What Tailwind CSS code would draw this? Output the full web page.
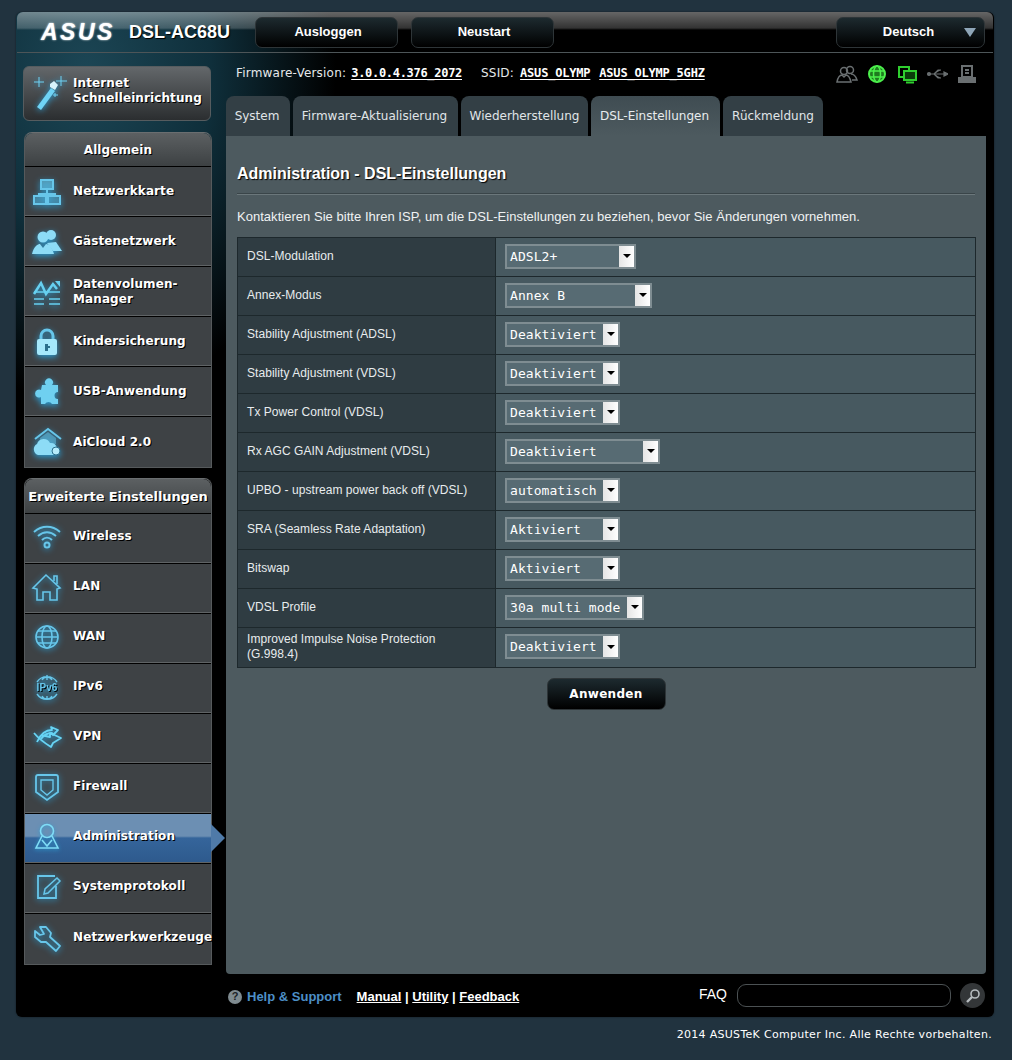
<!DOCTYPE html>
<html lang="de">
<head>
    <meta charset="UTF-8">
    <meta name="viewport" content="width=device-width, initial-scale=1.0">
    <title>ASUS DSL-AC68U - DSL-Einstellungen</title>
    <script src="https://cdn.jsdelivr.net/npm/@tailwindcss/browser@4"></script>
</head>
<body class="bg-[#21333f] font-['Liberation_Sans',Arial,sans-serif] text-white h-[1060px] overflow-hidden">
    <div class="pt-[12px] pl-[16px]">
        <div class="relative w-[978px] h-[1005px] rounded-[6px] bg-black bg-[radial-gradient(ellipse_250px_330px_at_70px_60px,#1c4655_0%,#0f2f3b_50%,#000_100%)] shadow-[0_0_2px_#0008] flex flex-col">

            <!-- Header -->
            <div class="h-[41px] mx-[1px] rounded-t-[6px] border-b border-[#4d5558] bg-[linear-gradient(to_bottom,#ffffff66_0px,#ffffff33_16px,#ffffff00_18px)] flex items-center shrink-0">
                <span class="ml-[24px] w-[72px] font-bold italic text-[23px] leading-none tracking-[2.5px] whitespace-nowrap [text-shadow:0_0_2px_#fff]">ASUS</span>
                <span class="ml-[16px] w-[110px] font-bold text-[18px] [text-shadow:1px_1px_1px_#000]">DSL-AC68U</span>
                <button class="ml-[16px] w-[143px] h-[31px] rounded-[7px] border border-[#2e3538] bg-[linear-gradient(to_bottom,#1d2a2f,#000)] font-bold text-[13px] pl-[3px]">Ausloggen</button>
                <button class="ml-[13px] w-[143px] h-[31px] rounded-[7px] border border-[#2e3538] bg-[linear-gradient(to_bottom,#1d2a2f,#000)] font-bold text-[13px] pl-[3px]">Neustart</button>
                <div class="relative ml-[282px] w-[149px] h-[31px] rounded-[7px] border border-[#2e3538] bg-[linear-gradient(to_bottom,#1d2a2f,#000)] font-bold text-[13px] flex items-center justify-center pr-[4px]">
                    Deutsch
                    <span class="absolute right-[8px] top-[10px] w-0 h-0 border-l-[6px] border-r-[6px] border-t-[9px] border-l-transparent border-r-transparent border-t-[#8fa6b8]"></span>
                </div>
            </div>

            <div class="flex flex-1 min-h-0">
                <!-- Sidebar -->
                <aside class="w-[210px] shrink-0 pl-[7px] pt-[13px] font-['DejaVu_Sans',sans-serif] font-bold text-[12px] tracking-[0.1px] leading-[15px] [text-shadow:1px_1px_0_#000]">
                    <div class="w-[188px] h-[55px] rounded-[6px] border border-[#565c5f] bg-[linear-gradient(to_bottom,#63676a,#2b2e30)] flex items-center">
                        <svg class="shrink-0 w-[36px] h-[36px] ml-[8px] mr-[5px] -mt-[3px] drop-shadow-[0_1px_3px_#2a9fd6]" viewBox="0 0 36 36" fill="none">
                            <path d="M5 33 L19 14 L23 17 L9 36 Z" fill="#6fd3f5"/>
                            <path d="M18 10 L22 7 L26 11 L23 16 L18 13 Z" fill="#d8f3fc"/>
                            <path d="M7 3 V13 M2 8 H12 M29 2 V12 M24 7 H35 M23 19 V23 M21 21 H26" stroke="#6fd3f5" stroke-width="1"/>
                        </svg>
                        <span class="pb-[6px]">Internet<br>Schnelleinrichtung</span>
                    </div>

                    <div class="mt-[11px] ml-[1px] w-[188px] rounded-t-[8px] border border-[#565a5c] border-t-[#6a6e70]">
                        <div class="h-[33px] rounded-t-[8px] bg-[linear-gradient(to_bottom,#5c6062,#3d4143)] flex items-center justify-center pt-[2px]">Allgemein</div>

                        <a class="h-[50px] border-t border-t-black bg-[#3e4245] border-b border-b-[#5f6365] flex items-center pt-[1px]">
                            <svg class="shrink-0 w-[32px] h-[32px] mx-[6px] mr-[10px] drop-shadow-[0_2px_3px_#2a9fd6]" viewBox="0 0 32 32" fill="none" stroke="#67c6ea" stroke-width="2">
                                <rect x="10" y="4" width="12" height="9" fill="#67c6ea" fill-opacity=".55"/>
                                <path d="M16 13 V18 M8 21 V18 H24 V21"/>
                                <rect x="3" y="20" width="12" height="8" fill="#67c6ea" fill-opacity=".3"/>
                                <rect x="17" y="20" width="12" height="8" fill="#67c6ea" fill-opacity=".3"/>
                            </svg>
                            <span>Netzwerkkarte</span>
                        </a>
                        <a class="h-[50px] border-t border-t-black bg-[#3e4245] border-b border-b-[#5f6365] flex items-center pt-[1px]">
                            <svg class="shrink-0 w-[32px] h-[32px] mx-[6px] mr-[10px] drop-shadow-[0_2px_3px_#2a9fd6]" viewBox="0 0 32 32" fill="#8ddcf6">
                                <circle cx="20" cy="9" r="5"/>
                                <path d="M16 17 L25 16 L31 25 L22 25 Z"/>
                                <circle cx="12" cy="11" r="5.5"/>
                                <path d="M1 28 C3 20 7 18 9 18 L12 22 L15 18 C18 18 21 21 23 28 Z"/>
                            </svg>
                            <span>Gästenetzwerk</span>
                        </a>
                        <a class="h-[50px] border-t border-t-black bg-[#3e4245] border-b border-b-[#5f6365] flex items-center pt-[1px]">
                            <svg class="shrink-0 w-[32px] h-[32px] mx-[6px] mr-[10px] drop-shadow-[0_2px_3px_#2a9fd6]" viewBox="0 0 32 32" fill="none" stroke="#67d0f0" stroke-width="2.5">
                                <path d="M3 18 L10 7 L15 18 L22 8 L26 13" />
                                <path d="M24 5 H29 V11 Z" fill="#67d0f0" stroke="none"/>
                                <path d="M3 16 H29 M3 23 H13 M18 23 H29 M3 28 H13 M18 28 H29" stroke-width="1.5"/>
                            </svg>
                            <span>Datenvolumen-<br>Manager</span>
                        </a>
                        <a class="h-[50px] border-t border-t-black bg-[#3e4245] border-b border-b-[#5f6365] flex items-center pt-[1px]">
                            <svg class="shrink-0 w-[32px] h-[32px] mx-[6px] mr-[10px] drop-shadow-[0_2px_3px_#2a9fd6]" viewBox="0 0 32 32">
                                <path d="M10 14 V10 A6 6 0 0 1 22 10 V14" fill="none" stroke="#67c6ea" stroke-width="3"/>
                                <rect x="6" y="13" width="20" height="16" rx="2" fill="#a5e8fb"/>
                                <path d="M14 18 H17 V20 H19 V22 H17 V25 H14 Z" fill="#2b6f8c"/>
                            </svg>
                            <span>Kindersicherung</span>
                        </a>
                        <a class="h-[50px] border-t border-t-black bg-[#3e4245] border-b border-b-[#5f6365] flex items-center pt-[1px]">
                            <svg class="shrink-0 w-[32px] h-[32px] mx-[6px] mr-[10px] drop-shadow-[0_2px_3px_#2a9fd6]" viewBox="0 0 32 32" fill="#6fd0f0">
                                <path d="M11 9 H15 A4 4 0 1 1 21 9 H27 V16 A3.5 3.5 0 1 0 27 23 V28 H21 A4 4 0 0 0 14 28 H10 V21 A4 4 0 1 1 10 14 Z"/>
                            </svg>
                            <span>USB-Anwendung</span>
                        </a>
                        <a class="h-[51px] border-t border-t-black bg-[#3e4245] flex items-center">
                            <svg class="shrink-0 w-[32px] h-[32px] mx-[6px] mr-[10px] drop-shadow-[0_2px_3px_#2a9fd6]" viewBox="0 0 32 32">
                                <path d="M4 13 L17 3 L30 13" fill="none" stroke="#67c6ea" stroke-width="2"/>
                                <path d="M9 12 L17 6 L25 12 V18 H9 Z" fill="#67c6ea" fill-opacity=".5"/>
                                <path d="M7 29 A6 6 0 0 1 6 18 A7 7 0 0 1 19 17 A6 6 0 0 1 26 23 A4 4 0 0 1 25 29 Z" fill="#8ddcf6"/>
                                <circle cx="25" cy="25" r="4" fill="#b6ecfb" stroke="#2b6f8c"/>
                            </svg>
                            <span>AiCloud 2.0</span>
                        </a>
                    </div>

                    <div class="mt-[10px] ml-[1px] w-[188px] rounded-t-[8px] border border-[#565a5c] border-t-[#6a6e70]">
                        <div class="h-[34px] rounded-t-[8px] bg-[linear-gradient(to_bottom,#5c6062,#3d4143)] flex items-center justify-center whitespace-nowrap text-[13px] tracking-[-0.1px]">Erweiterte Einstellungen</div>

                        <a class="h-[50px] border-t border-t-black bg-[#3e4245] border-b border-b-[#5f6365] flex items-center pb-[3px]">
                            <svg class="shrink-0 w-[32px] h-[32px] mx-[6px] mr-[10px] drop-shadow-[0_1px_3px_#2a9fd6]" viewBox="0 0 32 32" fill="none" stroke="#67c6ea" stroke-width="2">
                                <path d="M3 11 C11 4 21 4 29 11 M7 15 C13 10 19 10 25 15 M11 19 C14 16 18 16 21 19"/>
                                <circle cx="16" cy="24" r="2.5"/>
                            </svg>
                            <span>Wireless</span>
                        </a>
                        <a class="h-[50px] border-t border-t-black bg-[#3e4245] border-b border-b-[#5f6365] flex items-center pb-[3px]">
                            <svg class="shrink-0 w-[32px] h-[32px] mx-[6px] mr-[10px] drop-shadow-[0_1px_3px_#2a9fd6]" viewBox="0 0 32 32" fill="none" stroke="#67c6ea" stroke-width="1.6">
                                <path d="M2 17 L15 4 L29 17 L26 18 V29 H19 V21 H12 V29 H6 V18 Z"/>
                                <path d="M23 10 V5 H26 V13"/>
                            </svg>
                            <span>LAN</span>
                        </a>
                        <a class="h-[50px] border-t border-t-black bg-[#3e4245] border-b border-b-[#5f6365] flex items-center pb-[3px]">
                            <svg class="shrink-0 w-[32px] h-[32px] mx-[6px] mr-[10px] drop-shadow-[0_1px_3px_#2a9fd6]" viewBox="0 0 32 32" fill="none" stroke="#67c6ea" stroke-width="1.6">
                                <circle cx="16" cy="16" r="11"/>
                                <ellipse cx="16" cy="16" rx="5" ry="11"/>
                                <path d="M5 16 H27 M7 10 H25 M7 22 H25"/>
                            </svg>
                            <span>WAN</span>
                        </a>
                        <a class="h-[50px] border-t border-t-black bg-[#3e4245] border-b border-b-[#5f6365] flex items-center pb-[3px]">
                            <svg class="shrink-0 w-[32px] h-[32px] mx-[6px] mr-[10px] drop-shadow-[0_1px_3px_#2a9fd6]" viewBox="0 0 32 32" fill="none" stroke="#67c6ea" stroke-width="1.4">
                                <path d="M6 11 A12 12 0 0 1 26 11 M6 23 A12 12 0 0 0 26 23 M11 9 C13 5 19 5 21 9 M11 25 C13 29 19 29 21 25 M16 4 V9 M16 25 V29"/>
                                <text x="16" y="20" font-family="Liberation Sans" font-size="10" text-anchor="middle" fill="#67c6ea" stroke="none">IPv6</text>
                            </svg>
                            <span>IPv6</span>
                        </a>
                        <a class="h-[50px] border-t border-t-black bg-[#3e4245] border-b border-b-[#5f6365] flex items-center pb-[3px]">
                            <svg class="shrink-0 w-[32px] h-[32px] mx-[6px] mr-[10px] drop-shadow-[0_1px_3px_#2a9fd6]" viewBox="0 0 32 32" fill="none" stroke="#67d4f4" stroke-width="1.8" stroke-linejoin="round">
                                <path d="M3 12 C8 18 12 21 20 26 L22 22 L30 17 L19 12 L19 16 L10 14"/>
                                <path d="M6 21 C10 12 16 9 21 9 L20 6 L27 9 L22 14 L21 12 C16 12 12 15 10 18"/>
                            </svg>
                            <span>VPN</span>
                        </a>
                        <a class="h-[50px] border-t border-t-black bg-[#3e4245] border-b border-b-[#5f6365] flex items-center pb-[3px]">
                            <svg class="shrink-0 w-[32px] h-[32px] mx-[6px] mr-[10px] drop-shadow-[0_1px_3px_#2a9fd6]" viewBox="0 0 32 32" fill="none" stroke="#67c6ea" stroke-width="1.8">
                                <path d="M7 4 H25 Q27 4 27 6 V21 L16 29 L5 21 V6 Q5 4 7 4 Z"/>
                                <path d="M10 9 H22 V19 L16 24 L10 19 Z" stroke-width="1.4"/>
                            </svg>
                            <span>Firewall</span>
                        </a>
                        <a class="relative h-[50px] border-t border-t-black bg-[linear-gradient(to_bottom,#6c8fb3_0%,#6c8fb3_46%,#35659b_50%,#2e5a8d_100%)] border-b border-b-[#5f6365] flex items-center pb-[3px]">
                            <svg class="shrink-0 w-[32px] h-[32px] mx-[6px] mr-[10px] drop-shadow-[0_1px_2px_#2a9fd6]" viewBox="0 0 32 32" fill="none" stroke="#7fdcf6" stroke-width="1.6">
                                <circle cx="16" cy="10" r="6.5"/>
                                <path d="M11 15 L5 27 H27 L21 15 M11 19 L16 25 L21 19"/>
                            </svg>
                            <span>Administration</span>
                            <span class="absolute -right-[14px] top-[10px] w-0 h-0 border-t-[14px] border-b-[14px] border-l-[14px] border-t-transparent border-b-transparent border-l-[#4f7aa8]"></span>
                        </a>
                        <a class="h-[50px] border-t border-t-black bg-[#3e4245] border-b border-b-[#5f6365] flex items-center pb-[3px]">
                            <svg class="shrink-0 w-[32px] h-[32px] mx-[6px] mr-[10px] drop-shadow-[0_1px_3px_#2a9fd6]" viewBox="0 0 32 32" fill="none" stroke="#67c6ea" stroke-width="1.8">
                                <path d="M24 5 H7 V27 H25 V15"/>
                                <path d="M13 23 L14 18 L26 7 L29 10 L17 22 Z" stroke-width="1.5"/>
                            </svg>
                            <span>Systemprotokoll</span>
                        </a>
                        <a class="h-[51px] border-t border-t-black bg-[#3e4245] flex items-center pb-[3px]">
                            <svg class="shrink-0 w-[32px] h-[32px] mx-[6px] mr-[10px] drop-shadow-[0_1px_3px_#2a9fd6]" viewBox="0 0 32 32" fill="none" stroke="#67c6ea" stroke-width="1.8" stroke-linejoin="round">
                                <path d="M9 5 H15 L20 11 L19 15 L29 24 L25 29 L15 20 L10 20 L4 15 L4 9 L9 13 L13 12 Z"/>
                            </svg>
                            <span class="whitespace-nowrap">Netzwerkwerkzeuge</span>
                        </a>
                    </div>
                </aside>

                <!-- Main -->
                <main class="w-[760px] flex flex-col">
                    <div class="h-[43px] flex items-start pt-[12px] pl-[10px] font-['DejaVu_Sans',sans-serif] text-[12px] tracking-[0.2px] leading-[16px] text-[#e6e9eb]">
                        <span>Firmware-Version:</span>
                        <a class="ml-[5px] font-['DejaVu_Sans_Mono',monospace] font-bold text-[12px] tracking-[-0.3px] text-white underline underline-offset-2">3.0.0.4.376_2072</a>
                        <span class="ml-[19px]">SSID:</span>
                        <a class="ml-[6px] font-['DejaVu_Sans_Mono',monospace] font-bold text-[12px] tracking-[-0.2px] text-white underline underline-offset-2">ASUS_OLYMP</a>
                        <a class="ml-[9px] font-['DejaVu_Sans_Mono',monospace] font-bold text-[12px] tracking-[-0.2px] text-white underline underline-offset-2">ASUS_OLYMP_5GHZ</a>
                        <div class="ml-auto flex items-center gap-[8px] -mt-[1px] mr-[8px]">
                            <svg class="w-[22px] h-[20px]" viewBox="0 0 22 20" fill="none" stroke="#6a6f71" stroke-width="1.5">
                                <circle cx="14" cy="6" r="3.5"/><circle cx="8" cy="7" r="3.5"/>
                                <path d="M1 18 C2 13 4 11 6 11 L8 13 L10 11 C12 11 14 14 15 18 Z M15 10 C18 10 20 13 21 16 H16"/>
                            </svg>
                            <svg class="w-[22px] h-[20px]" viewBox="0 0 22 20" fill="#1f7a1f" stroke="#4cf04c" stroke-width="2">
                                <circle cx="11" cy="10" r="8"/>
                                <ellipse cx="11" cy="10" rx="3.5" ry="8" stroke-width="1.5"/>
                                <path d="M3 7 H19 M3 13 H19" stroke-width="1.5"/>
                            </svg>
                            <svg class="w-[22px] h-[20px]" viewBox="0 0 22 20" fill="none" stroke="#2fce2f" stroke-width="2">
                                <path d="M7 13 H3 V3 H13 V6"/>
                                <rect x="8" y="7" width="12" height="9" fill="#0b3d0b"/>
                                <path d="M10 18.5 H18"/>
                            </svg>
                            <svg class="w-[22px] h-[20px]" viewBox="0 0 22 20" fill="#6a6f71" stroke="#6a6f71" stroke-width="1.2">
                                <path d="M2 10 H20 M8 10 L12 6 H15 M8 10 L12 14 H15"/>
                                <circle cx="3" cy="10" r="1.5"/>
                                <path d="M18 8 L22 10 L18 12 Z"/>
                            </svg>
                            <svg class="w-[22px] h-[20px]" viewBox="0 0 22 20" fill="none" stroke="#6a6f71" stroke-width="2">
                                <path d="M6 2 H16 V13 H6 Z M9 6 H13 M9 9 H13"/>
                                <path d="M3 14 H19 V18 H3 Z" fill="#6a6f71"/>
                            </svg>
                        </div>
                    </div>

                    <!-- Tabs -->
                    <div class="h-[40px] flex gap-[3px] font-['DejaVu_Sans',sans-serif] text-[12px]">
                        <div class="w-[64px] rounded-t-[8px] bg-[#333f45] text-[#e0e5e8] flex items-center justify-center pr-[2px]">System</div>
                        <div class="w-[165px] rounded-t-[8px] bg-[#333f45] text-[#e0e5e8] flex items-center justify-center pr-[2px]">Firmware-Aktualisierung</div>
                        <div class="w-[127px] rounded-t-[8px] bg-[#333f45] text-[#e0e5e8] flex items-center justify-center">Wiederherstellung</div>
                        <div class="w-[129px] rounded-t-[8px] bg-[linear-gradient(to_bottom,#3f4c52,#4d5a5f)] text-[#e8ecee] flex items-center justify-center pr-[2px]">DSL-Einstellungen</div>
                        <div class="w-[100px] rounded-t-[8px] bg-[#333f45] text-[#e0e5e8] flex items-center justify-center">Rückmeldung</div>
                    </div>

                    <!-- Panel -->
                    <div class="h-[838px] rounded-b-[4px] bg-[#4d5a5f] px-[11px]">
                        <h2 class="pt-[28px] h-[58px] font-bold text-[16px] leading-[20px] [text-shadow:1px_1px_1px_#000]">Administration - DSL-Einstellungen</h2>
                        <div class="h-[1px] bg-[#6b777b] shadow-[0_-1px_0_#3a4549]"></div>
                        <p class="mt-[14px] h-[28px] text-[13px] tracking-[0.03px] leading-[16px] text-[#f0f2f3]">Kontaktieren Sie bitte Ihren ISP, um die DSL-Einstellungen zu beziehen, bevor Sie Änderungen vornehmen.</p>

                        <div class="w-[739px] border border-[#1d282c] text-[12px] tracking-[0.05px] leading-[15px] text-[#e8ecee] divide-y divide-[#1d282c]">
                            <div class="flex h-[39px]">
                                <div class="w-[258px] border-r border-[#1d282c] bg-[#2f3c42] pl-[9px] pb-[2px] flex items-center">DSL-Modulation</div>
                                <div class="flex-1 bg-[#475960] pl-[9px] pb-[2px] flex items-center">
                                    <div class="w-[131px] h-[25px] border-2 border-[#7f8d92] bg-[#576b73] flex items-center justify-between font-['DejaVu_Sans_Mono',monospace] text-[13px] pl-[3px] text-white">ADSL2+<span class="w-[15px] h-[21px] bg-[linear-gradient(to_right,#e5e5e5,#fff)] flex items-center justify-center"><span class="w-0 h-0 border-l-[4px] border-r-[4px] border-t-[4px] border-l-transparent border-r-transparent border-t-black"></span></span></div>
                                </div>
                            </div>
                            <div class="flex h-[39px]">
                                <div class="w-[258px] border-r border-[#1d282c] bg-[#2f3c42] pl-[9px] pb-[2px] flex items-center">Annex-Modus</div>
                                <div class="flex-1 bg-[#475960] pl-[9px] pb-[2px] flex items-center">
                                    <div class="w-[147px] h-[25px] border-2 border-[#7f8d92] bg-[#576b73] flex items-center justify-between font-['DejaVu_Sans_Mono',monospace] text-[13px] pl-[3px] text-white">Annex B<span class="w-[15px] h-[21px] bg-[linear-gradient(to_right,#e5e5e5,#fff)] flex items-center justify-center"><span class="w-0 h-0 border-l-[4px] border-r-[4px] border-t-[4px] border-l-transparent border-r-transparent border-t-black"></span></span></div>
                                </div>
                            </div>
                            <div class="flex h-[39px]">
                                <div class="w-[258px] border-r border-[#1d282c] bg-[#2f3c42] pl-[9px] pb-[2px] flex items-center">Stability Adjustment (ADSL)</div>
                                <div class="flex-1 bg-[#475960] pl-[9px] pb-[2px] flex items-center">
                                    <div class="w-[115px] h-[25px] border-2 border-[#7f8d92] bg-[#576b73] flex items-center justify-between font-['DejaVu_Sans_Mono',monospace] text-[13px] pl-[3px] text-white">Deaktiviert<span class="w-[15px] h-[21px] bg-[linear-gradient(to_right,#e5e5e5,#fff)] flex items-center justify-center"><span class="w-0 h-0 border-l-[4px] border-r-[4px] border-t-[4px] border-l-transparent border-r-transparent border-t-black"></span></span></div>
                                </div>
                            </div>
                            <div class="flex h-[39px]">
                                <div class="w-[258px] border-r border-[#1d282c] bg-[#2f3c42] pl-[9px] pb-[2px] flex items-center">Stability Adjustment (VDSL)</div>
                                <div class="flex-1 bg-[#475960] pl-[9px] pb-[2px] flex items-center">
                                    <div class="w-[115px] h-[25px] border-2 border-[#7f8d92] bg-[#576b73] flex items-center justify-between font-['DejaVu_Sans_Mono',monospace] text-[13px] pl-[3px] text-white">Deaktiviert<span class="w-[15px] h-[21px] bg-[linear-gradient(to_right,#e5e5e5,#fff)] flex items-center justify-center"><span class="w-0 h-0 border-l-[4px] border-r-[4px] border-t-[4px] border-l-transparent border-r-transparent border-t-black"></span></span></div>
                                </div>
                            </div>
                            <div class="flex h-[39px]">
                                <div class="w-[258px] border-r border-[#1d282c] bg-[#2f3c42] pl-[9px] pb-[2px] flex items-center">Tx Power Control (VDSL)</div>
                                <div class="flex-1 bg-[#475960] pl-[9px] pb-[2px] flex items-center">
                                    <div class="w-[115px] h-[25px] border-2 border-[#7f8d92] bg-[#576b73] flex items-center justify-between font-['DejaVu_Sans_Mono',monospace] text-[13px] pl-[3px] text-white">Deaktiviert<span class="w-[15px] h-[21px] bg-[linear-gradient(to_right,#e5e5e5,#fff)] flex items-center justify-center"><span class="w-0 h-0 border-l-[4px] border-r-[4px] border-t-[4px] border-l-transparent border-r-transparent border-t-black"></span></span></div>
                                </div>
                            </div>
                            <div class="flex h-[39px]">
                                <div class="w-[258px] border-r border-[#1d282c] bg-[#2f3c42] pl-[9px] pb-[2px] flex items-center">Rx AGC GAIN Adjustment (VDSL)</div>
                                <div class="flex-1 bg-[#475960] pl-[9px] pb-[2px] flex items-center">
                                    <div class="w-[155px] h-[25px] border-2 border-[#7f8d92] bg-[#576b73] flex items-center justify-between font-['DejaVu_Sans_Mono',monospace] text-[13px] pl-[3px] text-white">Deaktiviert<span class="w-[15px] h-[21px] bg-[linear-gradient(to_right,#e5e5e5,#fff)] flex items-center justify-center"><span class="w-0 h-0 border-l-[4px] border-r-[4px] border-t-[4px] border-l-transparent border-r-transparent border-t-black"></span></span></div>
                                </div>
                            </div>
                            <div class="flex h-[39px]">
                                <div class="w-[258px] border-r border-[#1d282c] bg-[#2f3c42] pl-[9px] pb-[2px] flex items-center">UPBO - upstream power back off (VDSL)</div>
                                <div class="flex-1 bg-[#475960] pl-[9px] pb-[2px] flex items-center">
                                    <div class="w-[115px] h-[25px] border-2 border-[#7f8d92] bg-[#576b73] flex items-center justify-between font-['DejaVu_Sans_Mono',monospace] text-[13px] pl-[3px] text-white">automatisch<span class="w-[15px] h-[21px] bg-[linear-gradient(to_right,#e5e5e5,#fff)] flex items-center justify-center"><span class="w-0 h-0 border-l-[4px] border-r-[4px] border-t-[4px] border-l-transparent border-r-transparent border-t-black"></span></span></div>
                                </div>
                            </div>
                            <div class="flex h-[39px]">
                                <div class="w-[258px] border-r border-[#1d282c] bg-[#2f3c42] pl-[9px] pb-[2px] flex items-center">SRA (Seamless Rate Adaptation)</div>
                                <div class="flex-1 bg-[#475960] pl-[9px] pb-[2px] flex items-center">
                                    <div class="w-[115px] h-[25px] border-2 border-[#7f8d92] bg-[#576b73] flex items-center justify-between font-['DejaVu_Sans_Mono',monospace] text-[13px] pl-[3px] text-white">Aktiviert<span class="w-[15px] h-[21px] bg-[linear-gradient(to_right,#e5e5e5,#fff)] flex items-center justify-center"><span class="w-0 h-0 border-l-[4px] border-r-[4px] border-t-[4px] border-l-transparent border-r-transparent border-t-black"></span></span></div>
                                </div>
                            </div>
                            <div class="flex h-[39px]">
                                <div class="w-[258px] border-r border-[#1d282c] bg-[#2f3c42] pl-[9px] pb-[2px] flex items-center">Bitswap</div>
                                <div class="flex-1 bg-[#475960] pl-[9px] pb-[2px] flex items-center">
                                    <div class="w-[115px] h-[25px] border-2 border-[#7f8d92] bg-[#576b73] flex items-center justify-between font-['DejaVu_Sans_Mono',monospace] text-[13px] pl-[3px] text-white">Aktiviert<span class="w-[15px] h-[21px] bg-[linear-gradient(to_right,#e5e5e5,#fff)] flex items-center justify-center"><span class="w-0 h-0 border-l-[4px] border-r-[4px] border-t-[4px] border-l-transparent border-r-transparent border-t-black"></span></span></div>
                                </div>
                            </div>
                            <div class="flex h-[39px]">
                                <div class="w-[258px] border-r border-[#1d282c] bg-[#2f3c42] pl-[9px] pb-[2px] flex items-center">VDSL Profile</div>
                                <div class="flex-1 bg-[#475960] pl-[9px] pb-[2px] flex items-center">
                                    <div class="w-[139px] h-[25px] border-2 border-[#7f8d92] bg-[#576b73] flex items-center justify-between font-['DejaVu_Sans_Mono',monospace] text-[13px] pl-[3px] text-white">30a multi mode<span class="w-[15px] h-[21px] bg-[linear-gradient(to_right,#e5e5e5,#fff)] flex items-center justify-center"><span class="w-0 h-0 border-l-[4px] border-r-[4px] border-t-[4px] border-l-transparent border-r-transparent border-t-black"></span></span></div>
                                </div>
                            </div>
                            <div class="flex h-[39px]">
                                <div class="w-[258px] border-r border-[#1d282c] bg-[#2f3c42] pl-[9px] pb-[2px] flex items-center">Improved Impulse Noise Protection<br>(G.998.4)</div>
                                <div class="flex-1 bg-[#475960] pl-[9px] pb-[2px] flex items-center">
                                    <div class="w-[115px] h-[25px] border-2 border-[#7f8d92] bg-[#576b73] flex items-center justify-between font-['DejaVu_Sans_Mono',monospace] text-[13px] pl-[3px] text-white">Deaktiviert<span class="w-[15px] h-[21px] bg-[linear-gradient(to_right,#e5e5e5,#fff)] flex items-center justify-center"><span class="w-0 h-0 border-l-[4px] border-r-[4px] border-t-[4px] border-l-transparent border-r-transparent border-t-black"></span></span></div>
                                </div>
                            </div>
                        </div>

                        <div class="flex justify-center mt-[10px]">
                            <button class="w-[119px] h-[32px] rounded-[7px] border border-[#2e3538] bg-[linear-gradient(to_bottom,#1d2a2f,#000)] font-['DejaVu_Sans',sans-serif] font-bold text-[12px] tracking-[0.3px]">Anwenden</button>
                        </div>
                    </div>

                    <!-- Footer -->
                    <div class="flex-1 flex items-center pl-[2px]">
                        <span class="mt-[2px] w-[14px] h-[14px] rounded-full bg-[#7f8b90] text-[#1b2327] text-[11px] font-bold flex items-center justify-center">?</span>
                        <a class="mt-[2px] ml-[5px] text-[13px] font-bold text-[#4d8fc7]">Help &amp; Support</a>
                        <div class="mt-[2px] ml-[15px] text-[13px] font-bold">
                            <a class="underline">Manual</a> | <a class="underline">Utility</a> | <a class="underline">Feedback</a>
                        </div>
                        <span class="ml-auto text-[14px] -mt-[3px]">FAQ</span>
                        <input class="ml-[10px] w-[214px] h-[23px] rounded-[9px] border border-[#4b5153] bg-black" type="text" aria-label="FAQ">
                        <span class="ml-[9px] w-[25px] h-[25px] rounded-full bg-[#333638] flex items-center justify-center">
                            <svg class="w-[16px] h-[16px]" viewBox="0 0 16 16" fill="none" stroke="#b6bcbf" stroke-width="1.6">
                                <circle cx="10" cy="6" r="4"/><path d="M7 9 L2 14" stroke-width="2.4"/>
                            </svg>
                        </span>
                        <span class="w-[1px]"></span>
                    </div>
                </main>
            </div>
        </div>
    </div>

    <div class="pr-[20px] pt-[11px] text-right font-['DejaVu_Sans',sans-serif] text-[11px] tracking-[0.3px] leading-[14px] text-white">2014 ASUSTeK Computer Inc. Alle Rechte vorbehalten.</div>
</body>
</html>
